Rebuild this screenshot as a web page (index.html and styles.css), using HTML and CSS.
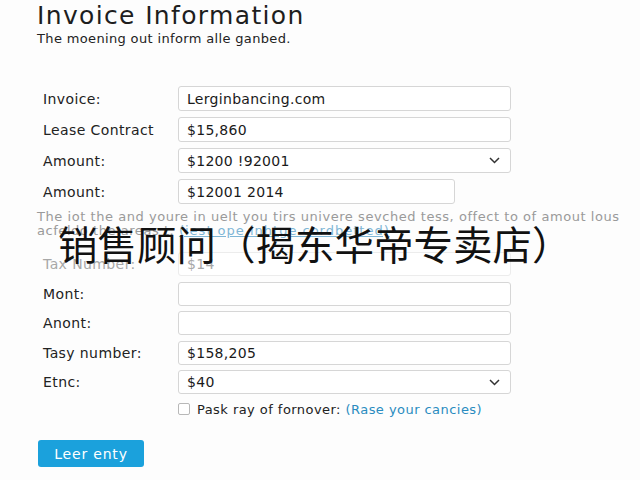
FILE: index.html
```html
<!DOCTYPE html>
<html lang="en">
<head>
<meta charset="utf-8">
<title>Invoice Information</title>
<link rel="stylesheet" href="styles.css">
</head>
<body>
<main class="page">
  <h1 class="title">Invoice Information</h1>
  <p class="subtitle">The moening out inform alle ganbed.</p>

  <div class="form group-a">
    <label class="label">Invoice:</label>
    <div class="field">Lerginbancing.com</div>

    <label class="label">Lease Contract</label>
    <div class="field">$15,860</div>

    <label class="label">Amount:</label>
    <div class="field select">$1200 !92001
      <svg class="chev" width="11" height="7" viewBox="0 0 11 7"><polyline points="1,1 5.5,5.5 10,1" fill="none" stroke="#333" stroke-width="1.5"/></svg>
    </div>

    <label class="label">Amount:</label>
    <div class="field short">$12001 2014</div>
  </div>

  <p class="help">The iot the and youre in uelt you tirs univere sevched tess, offect to of amout lous<br>acfeldo the areas t. <a class="link" href="#">(iest ope inhtge cordbetted)</a></p>

  <div class="form group-b">
    <label class="label faded">Tax Number:</label>
    <div class="field faded-field">$14</div>

    <label class="label">Mont:</label>
    <div class="field"></div>

    <label class="label">Anont:</label>
    <div class="field"></div>

    <label class="label">Tasy number:</label>
    <div class="field">$158,205</div>

    <label class="label">Etnc:</label>
    <div class="field select">$40
      <svg class="chev" width="11" height="7" viewBox="0 0 11 7"><polyline points="1,1 5.5,5.5 10,1" fill="none" stroke="#333" stroke-width="1.5"/></svg>
    </div>
  </div>

  <div class="check-row">
    <span class="box"></span>
    <span class="check-text">Pask ray of fornover: <span class="link-plain">(Rase your cancies)</span></span>
  </div>

  <button class="btn" type="button">Leer enty</button>

  <div class="overlay">销售顾问（揭东华帝专卖店）</div>
</main>
</body>
</html>
```
FILE: styles.css
```css
html, body {
  margin: 0;
  padding: 0;
  background: #fdfdfd;
}
body {
  font-family: "DejaVu Sans", "Liberation Sans", sans-serif;
  color: #222;
  width: 640px;
  height: 480px;
  overflow: hidden;
}
.page {
  position: relative;
  padding: 2px 0 0 37px;
  height: 478px;
}
.title {
  margin: 0;
  font-size: 25px;
  font-weight: normal;
  letter-spacing: 1.35px;
  line-height: 28px;
  color: #1e1e1e;
}
.subtitle {
  margin: 0;
  font-size: 13px;
  letter-spacing: 0.35px;
  line-height: 17px;
  color: #222;
}
.form {
  display: grid;
  grid-template-columns: 135px 333px;
  margin-left: 6px;
  align-items: center;
}
.group-a {
  margin-top: 39px;
  grid-auto-rows: 25px;
  row-gap: 6px;
}
.group-b {
  margin-top: 14px;
  grid-auto-rows: 24px;
  row-gap: 5.5px;
}
.label {
  font-size: 14px;
  letter-spacing: 0.4px;
  color: #222;
}
.field {
  box-sizing: border-box;
  height: 100%;
  border: 1px solid #d6d6d6;
  border-radius: 3px;
  background: #fff;
  padding-left: 8px;
  font-size: 14px;
  letter-spacing: 0.3px;
  color: #1a1a1a;
  display: flex;
  align-items: center;
}
.short {
  width: 277px;
}
.select {
  justify-content: space-between;
  padding-right: 10px;
}
.chev {
  display: block;
}
.faded {
  color: #a8a8a8;
}
.faded-field {
  color: #a8a8a8;
  border-color: #ececec;
}
.help {
  margin: 6px 0 0;
  font-size: 13px;
  letter-spacing: 0.55px;
  line-height: 14px;
  color: #9a9a9a;
  white-space: nowrap;
}
.link {
  color: #7fb6d6;
  text-decoration: underline;
  letter-spacing: 1px;
}
.check-row {
  display: flex;
  align-items: center;
  gap: 7px;
  margin: 7px 0 0 141px;
  height: 16px;
}
.box {
  box-sizing: border-box;
  width: 12px;
  height: 12px;
  border: 1px solid #b8b8b8;
  border-radius: 2px;
  background: #fff;
}
.check-text {
  font-size: 13px;
  letter-spacing: 0.45px;
  color: #222;
}
.link-plain {
  color: #2a8cc0;
}
.btn {
  display: block;
  margin: 23px 0 0 1px;
  width: 106px;
  height: 27px;
  border: none;
  border-radius: 3px;
  background: #1ba1dc;
  color: #fff;
  font-family: "DejaVu Sans", sans-serif;
  font-size: 14px;
  letter-spacing: 0.8px;
  padding: 0;
}
.overlay {
  position: absolute;
  left: 58px;
  top: 219px;
  font-family: "Noto Sans CJK SC", sans-serif;
  font-size: 39.5px;
  font-weight: 400;
  line-height: 48px;
  color: #111;
  white-space: nowrap;
}
```
